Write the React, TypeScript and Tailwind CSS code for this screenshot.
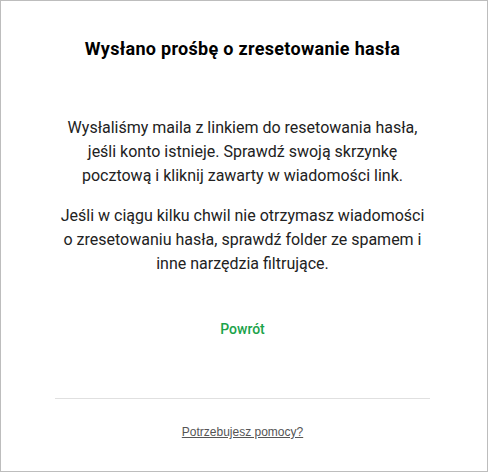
export default function App() {
  return (
    <div
      className="w-[488px] h-[472px] bg-white border border-[#bdbdbd] flex flex-col items-center pl-[54px] pr-[57px] pt-[36px] text-center"
      style={{ fontFamily: "Roboto, 'Noto Sans', sans-serif" }}
    >
      <h1 className="text-[18px] leading-6 font-bold tracking-[0.3px] text-black">
        Wysłano prośbę o zresetowanie hasła
      </h1>

      <div className="mt-[55px] text-base leading-6 text-[#222]">
        <p>
          Wysłaliśmy maila z linkiem do resetowania hasła, jeśli konto istnieje. Sprawdź swoją skrzynkę
          pocztową i kliknij zawarty w wiadomości link.
        </p>
        <p className="mt-4">
          Jeśli w ciągu kilku chwil nie otrzymasz wiadomości o zresetowaniu hasła, sprawdź folder ze spamem i
          inne narzędzia filtrujące.
        </p>
      </div>

      <a href="#" className="mt-[43px] text-sm leading-5 font-medium text-[#1aa34a]">
        Powrót
      </a>

      <div className="mt-[59px] w-full h-px bg-[#e0e0e0]" />

      <a
        href="#"
        className="mt-[25px] text-xs leading-4 text-[#555] underline"
        style={{ fontFamily: "'Liberation Sans', Arial, sans-serif" }}
      >
        Potrzebujesz pomocy?
      </a>
    </div>
  );
}
